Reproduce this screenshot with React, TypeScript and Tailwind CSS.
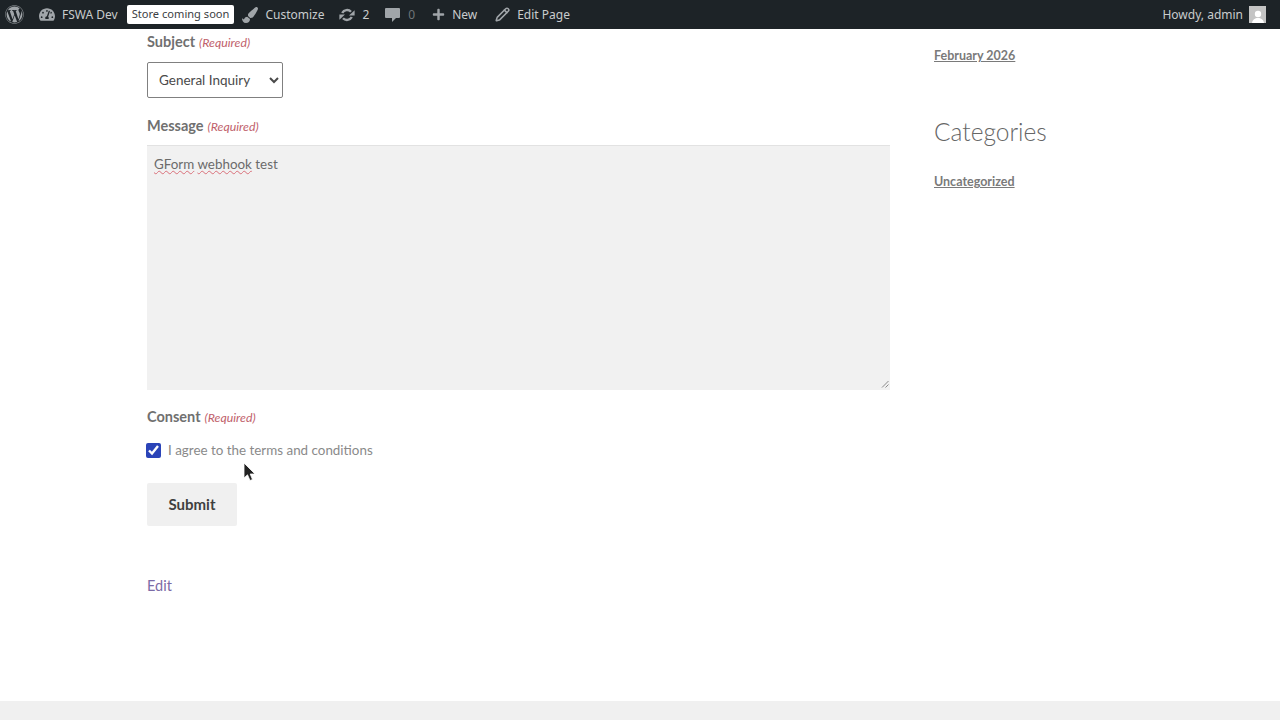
import { FaWordpress, FaTachometerAlt, FaPaintBrush, FaPlus } from 'react-icons/fa'
import { Pencil } from 'lucide-react'

const adminFont = { fontFamily: '"Noto Sans", sans-serif' }

const Required = () => (
  <span className="ml-1 text-[12.3px] font-normal italic text-[#c0606a]">(Required)</span>
)

const AdminBar = () => (
  <div
    className="flex h-[29px] items-center justify-between bg-[#1d2327] pr-[14px] text-[12px] text-[#c9cccd]"
    style={adminFont}
  >
    <div className="flex items-center">
      <FaWordpress className="ml-[5px] h-[19px] w-[19px] text-[#a0a5a9]" />
      <FaTachometerAlt className="ml-[15px] h-[15px] w-[16px] text-[#a0a5a9]" />
      <span className="ml-[7px]">FSWA Dev</span>
      <span className="ml-[9px] rounded-[2px] bg-white px-[5px] py-[1px] text-[11.1px] text-[#3c4043]">
        Store coming soon
      </span>
      <FaPaintBrush className="ml-[8px] h-[16px] w-[16px] text-[#a0a5a9]" />
      <span className="ml-[7px] w-[58px] whitespace-nowrap">Customize</span>
      <svg className="ml-[16px] h-[16px] w-[16px] text-[#a0a5a9]" viewBox="0 0 20 20" fill="none" stroke="currentColor" strokeWidth="3">
        <path d="M4 7.500a6.800 6.800 0 0 1 11-1.500" />
        <path d="M16 12.500a6.800 6.800 0 0 1-11 1.500" />
        <path d="M19.500 4v6.500H12.500z" fill="currentColor" stroke="none" />
        <path d="M0.500 16V9.500H7.500z" fill="currentColor" stroke="none" />
      </svg>
      <span className="ml-[7px]">2</span>
      <svg className="ml-[16px] h-[16px] w-[15px] text-[#a0a5a9]" viewBox="0 0 15 16" fill="currentColor">
        <path d="M1 1h13a1 1 0 0 1 1 1v8a1 1 0 0 1-1 1h-3l-4 4v-4H1a1 1 0 0 1-1-1V2a1 1 0 0 1 1-1z" />
      </svg>
      <span className="ml-[8px] text-[#6f7478]">0</span>
      <FaPlus className="ml-[17px] h-[13px] w-[13px] text-[#a0a5a9]" />
      <span className="ml-[7px] w-[26px]">New</span>
      <Pencil className="ml-[17px] h-[15px] w-[15px] text-[#a0a5a9]" strokeWidth={2.500} />
      <span className="ml-[7px]">Edit Page</span>
    </div>
    <div className="flex items-center">
      <span>Howdy, admin</span>
      <span className="ml-[6px] flex h-[17px] w-[17px] items-end justify-center overflow-hidden bg-[#c4c4c4]">
        <svg className="h-[14px] w-[14px] text-white" viewBox="0 0 14 14" fill="currentColor">
          <circle cx="7" cy="5" r="3.200" />
          <path d="M1 14c.5-3.500 3-5 6-5s5.500 1.500 6 5z" />
        </svg>
      </span>
    </div>
  </div>
)

const App = () => {
  return (
    <div
      className="flex h-[720px] flex-col overflow-hidden bg-white text-[#707070]"
      style={{ fontFamily: 'Lato, "Noto Sans", sans-serif' }}
    >
      <AdminBar />
      <div className="relative flex flex-1 pl-[147px]">
        <div className="w-[743px]">
          <div className="mt-[4px] text-[14.5px] font-bold leading-[18px]">
            Subject<Required />
          </div>
          <select className="mt-[10px] block h-[36px] w-[136px] rounded-[2px] border border-[#808080] bg-white pl-[7px] text-[13.5px] text-[#4a4a4a]">
            <option>General Inquiry</option>
          </select>

          <div className="mt-[19px] text-[14.5px] font-bold leading-[18px]">
            Message<Required />
          </div>
          <div className="relative mt-[9px] h-[245px] border-t border-[#e2e2e2] bg-[#f1f1f1] px-[7px] pt-[9px] text-[13.4px] leading-[18px] text-[#6b6b6b]">
            <span className="underline decoration-[#d9707a] decoration-wavy decoration-1">GForm</span>{' '}
            <span className="underline decoration-[#d9707a] decoration-wavy decoration-1">webhook</span> test
            <svg className="absolute bottom-[2px] right-[1px] h-[8px] w-[8px] text-[#8a8a8a]" viewBox="0 0 8 8" stroke="currentColor" fill="none">
              <path d="M1 7.500 7.500 1M4.500 7.500 7.500 4.500" />
            </svg>
          </div>

          <div className="mt-[18px] text-[14.5px] font-bold leading-[18px]">
            Consent<Required />
          </div>
          <label className="mt-[14px] flex items-center text-[13.4px] leading-[18px] text-[#8a8a8a]">
            <input type="checkbox" defaultChecked className="-ml-[1px] h-[15px] w-[15px] accent-[#2b44b8]" />
            <span className="ml-[7px]">I agree to the terms and conditions</span>
          </label>

          <button className="mt-[24px] block h-[43px] w-[90px] rounded-[2px] bg-[#f0f0f0] text-[15px] font-bold text-[#3f3f3f]">
            Submit
          </button>

          <a className="mt-[50px] block text-[14.5px] leading-[20px] text-[#7b6ba6]">Edit</a>
        </div>

        <div className="ml-[44px] w-[200px]">
          <a className="mt-[18px] block text-[12.5px] font-bold leading-[17px] text-[#7a7a7a] underline">February 2026</a>
          <h2 className="mt-[52px] text-[24.5px] font-light leading-[32px] text-[#666666]">Categories</h2>
          <a className="mt-[25px] block text-[12.5px] font-bold leading-[17px] text-[#7a7a7a] underline">Uncategorized</a>
        </div>

        {/* mouse pointer */}
        <svg className="absolute left-[243px] top-[433px] h-[20px] w-[13px]" viewBox="0 0 13 20">
          <path d="M1 1v15l3.500-3.200L7 18.500l2.500-1-2.300-5.500H12z" fill="#222222" stroke="#ffffff" strokeWidth="0.800" />
        </svg>
      </div>
      <div className="h-[19px] bg-[#f0f0f0]" />
    </div>
  )
}

export default App
